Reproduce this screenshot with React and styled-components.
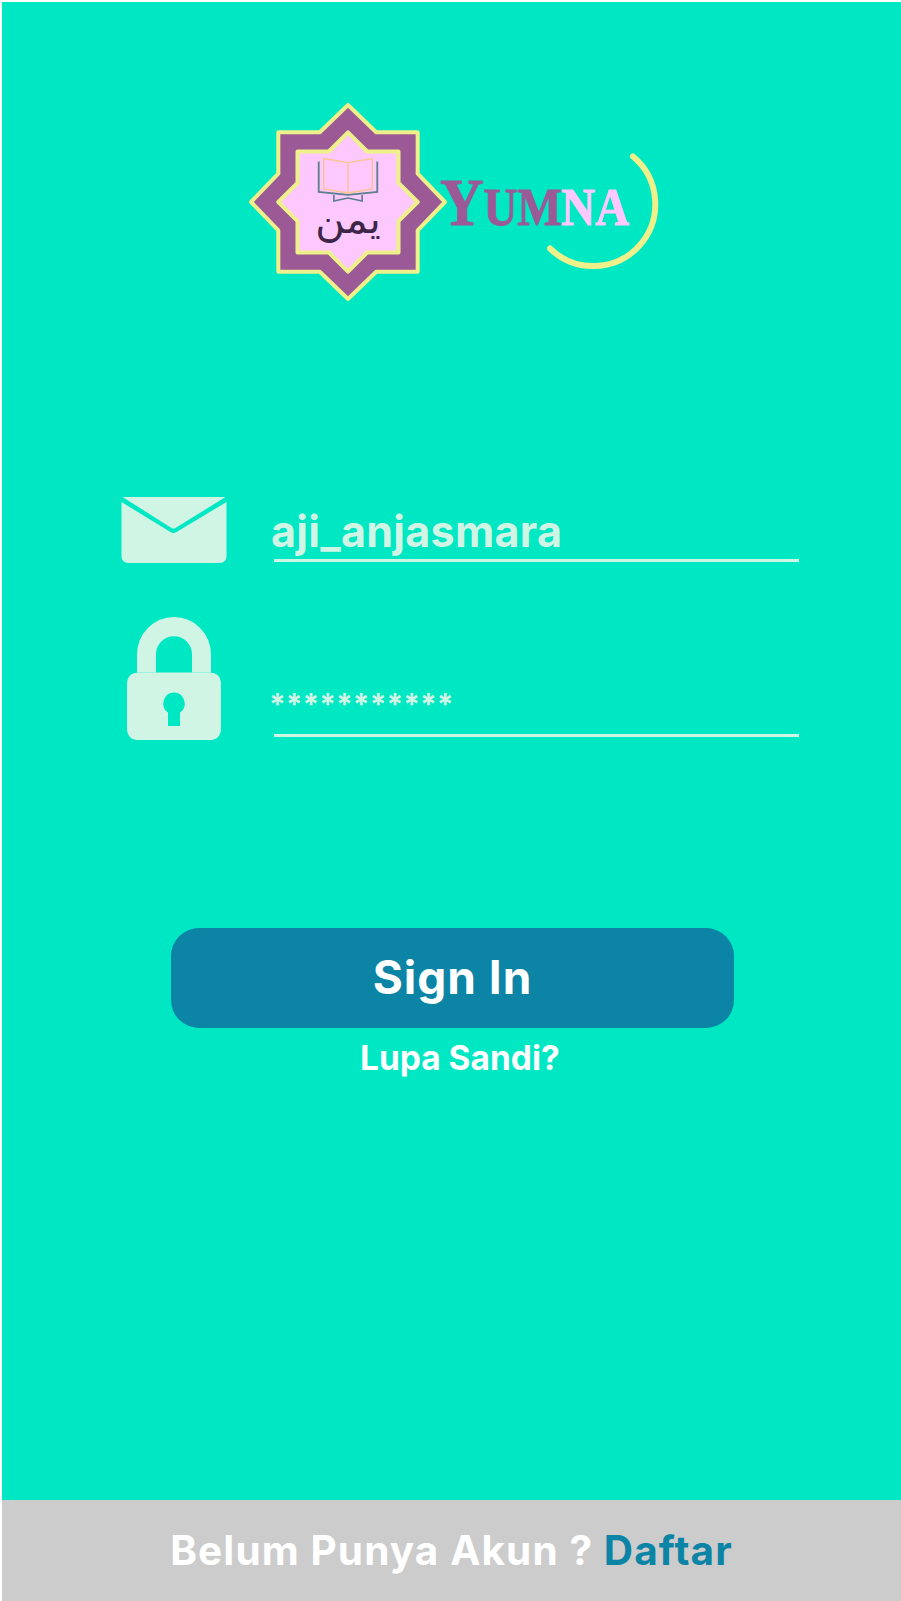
import React from 'react';
import styled, { createGlobalStyle } from 'styled-components';

const GlobalStyle = createGlobalStyle`
  html, body {
    margin: 0;
    padding: 0;
    background: #ffffff;
  }
  body {
    font-family: "Inter", "Liberation Sans", sans-serif;
  }
`;

function Logo() {
  return (
    <LogoSvg viewBox="0 0 430 210" width="430" height="210">
      {/* star, origin at its centre */}
      <g transform="translate(101 104) scale(1.01)">
        <polygon
          points="0,-96 28,-69 69,-69 69,-28 96,0 69,28 69,69 28,69 0,96 -28,69 -69,69 -69,28 -96,0 -69,-28 -69,-69 -28,-69"
          fill="#9b5a96"
          stroke="#eef08a"
          strokeWidth="4"
          strokeLinejoin="round"
        />
        <polygon
          points="0,-69 19,-50 50,-50 50,-19 69,0 50,19 50,50 19,50 0,69 -19,50 -50,50 -50,19 -69,0 -50,-19 -50,-50 -19,-50"
          fill="#fdc8fd"
          stroke="#eef08a"
          strokeWidth="4"
          strokeLinejoin="round"
        />
        {/* book */}
        <path d="M-29 -40 v30 l29 3 l29 -3 v-30" fill="none" stroke="#5b7f8c" strokeWidth="1.8" />
        <path d="M-24 -43 l24 4 l24 -4 v30 l-24 4 l-24 -4 z M0 -39 v30" fill="#fdc8fd" stroke="#f7c58e" strokeWidth="1.4" />
        <path d="M-14 -7 v6 l14 -3 l14 3 v-6" stroke="#5b7f8c" strokeWidth="1.6" fill="none" />
        <ArabicMark x="0" y="31" textAnchor="middle">يمن</ArabicMark>
      </g>
      {/* word mark */}
      <g transform="translate(193 127) scale(0.885 1)">
        <WordMark>
          <tspan fontSize="68" fill="#9b5a96" stroke="#9b5a96">Y</tspan>
          <tspan fontSize="53" fill="#9b5a96" stroke="#9b5a96">UM</tspan>
          <tspan fontSize="53" fill="#fdc8fd" stroke="#fdc8fd">NA</tspan>
        </WordMark>
      </g>
      <path
        d="M386 58.5 A62 62 0 1 1 303 150.5"
        fill="none"
        stroke="#eef08a"
        strokeWidth="6"
        strokeLinecap="round"
      />
    </LogoSvg>
  );
}

function MailIcon() {
  return (
    <svg viewBox="0 0 105 66" width="106" height="66">
      <path d="M1 0 H104 L54 31 Q52 32 50 31 Z" fill="#d0f5e5" />
      <path d="M0 5 L49 35 Q52 37 55 35 L105 5 V59 Q105 66 98 66 H7 Q0 66 0 59 Z" fill="#d0f5e5" />
    </svg>
  );
}

function LockIcon() {
  return (
    <svg viewBox="0 0 94 122" width="94" height="123" preserveAspectRatio="none">
      <path
        d="M10 55 V37 A37 37 0 0 1 84 37 V55 H65 V37 A18 18 0 0 0 29 37 V55 Z"
        fill="#d0f5e5"
      />
      <path
        fillRule="evenodd"
        d="M12 55 H82 Q94 55 94 67 V110 Q94 122 82 122 H12 Q0 122 0 110 V67 Q0 55 12 55 Z M47 75 A11 11 0 0 0 41 95 V108 H53 V95 A11 11 0 0 0 47 75 Z"
        fill="#d0f5e5"
      />
    </svg>
  );
}

function App() {
  return (
    <Page>
      <GlobalStyle />
      <Main>
        <Logo />
        <Form>
          <EmailRow>
            <IconSlot>
              <MailIcon />
            </IconSlot>
            <Field>
              <Value>aji_anjasmara</Value>
            </Field>
          </EmailRow>
          <PasswordRow>
            <IconSlot>
              <LockIcon />
            </IconSlot>
            <PasswordField>
              <SecretValue>***********</SecretValue>
            </PasswordField>
          </PasswordRow>
        </Form>
        <SignIn type="button">Sign In</SignIn>
        <Forgot>Lupa Sandi?</Forgot>
      </Main>
      <Footer>
        <span>Belum Punya Akun ? </span>
        <FooterLink>Daftar</FooterLink>
      </Footer>
    </Page>
  );
}

export default App;

const Page = styled.div`
  display: flex;
  flex-direction: column;
  width: 899px;
  height: 1599px;
  margin: 2px 0 0 2px;
  overflow: hidden;
`;

const Main = styled.main`
  flex: 1;
  display: flex;
  flex-direction: column;
  background: #00e7c4;
  padding-top: 96px;
`;

const LogoSvg = styled.svg`
  display: block;
  margin-left: 245px;
`;

const ArabicMark = styled.text`
  font-family: "DejaVu Sans", sans-serif;
  font-size: 40px;
  font-weight: 400;
  fill: #3d2547;
`;

const WordMark = styled.text`
  font-family: "Liberation Serif", serif;
  font-weight: 700;
`;

const Form = styled.div`
  display: flex;
  flex-direction: column;
  gap: 54px;
  margin-top: 189px;
  padding-left: 119px;
`;

const EmailRow = styled.div`
  display: flex;
  align-items: flex-end;
`;

const PasswordRow = styled(EmailRow)``;

const IconSlot = styled.div`
  display: flex;
  justify-content: center;
  width: 106px;
  svg {
    display: block;
  }
`;

const Field = styled.div`
  width: 525px;
  margin: 0 0 1px 47px;
  border-bottom: 3px solid #d0f5e5;
`;

const PasswordField = styled(Field)`
  margin-bottom: 3px;
`;

const Value = styled.div`
  margin-left: -3px;
  padding-bottom: 3px;
  color: #d0f5e5;
  font-size: 43px;
  font-weight: 700;
  line-height: 50px;
  letter-spacing: 0.3px;
`;

const SecretValue = styled(Value)`
  margin-left: -5px;
  padding-bottom: 8px;
  font-size: 30px;
  line-height: 44px;
  letter-spacing: 0;
`;

const SignIn = styled.button`
  display: block;
  width: 563px;
  height: 100px;
  margin: 188px 0 0 169px;
  padding: 0 0 2px;
  border: 0;
  border-radius: 28px;
  background: #0b84a5;
  color: #ffffff;
  font-family: inherit;
  font-size: 46px;
  font-weight: 700;
  letter-spacing: 1px;
`;

const Forgot = styled.div`
  margin: 12px 0 0 358px;
  color: #ffffff;
  font-size: 33.5px;
  font-weight: 700;
  line-height: 36px;
`;

const Footer = styled.footer`
  display: flex;
  align-items: center;
  justify-content: center;
  height: 101px;
  background: #cccccc;
  color: #ffffff;
  font-size: 40.5px;
  font-weight: 700;
  letter-spacing: 1.1px;
  white-space: pre;
`;

const FooterLink = styled.span`
  color: #0b84a5;
`;
